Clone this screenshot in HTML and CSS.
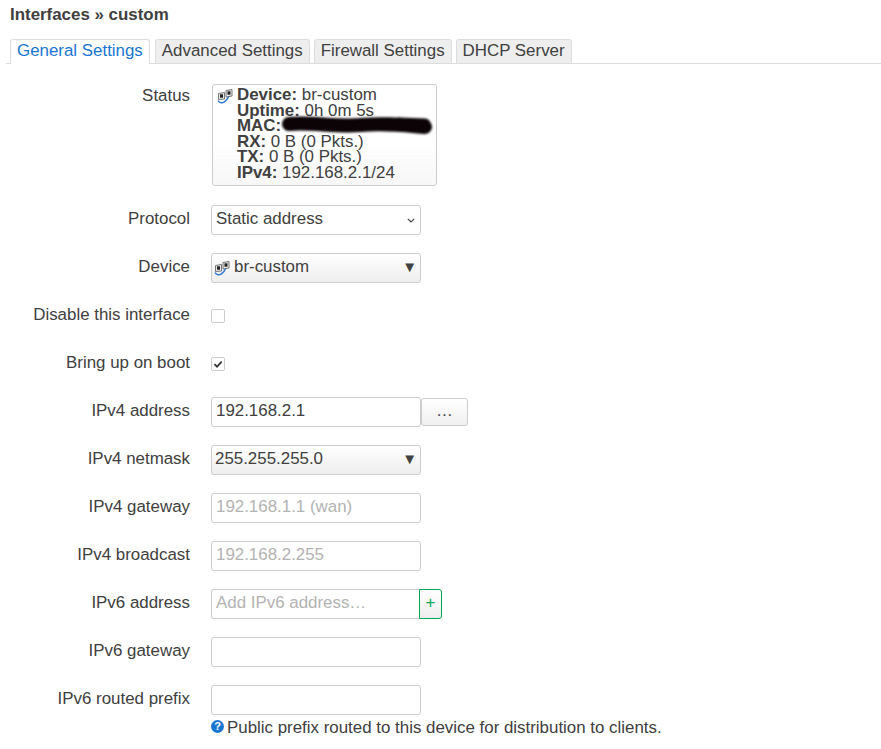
FILE: index.html
```html
<!DOCTYPE html>
<html lang="en">
<head>
<meta charset="utf-8">
<title>Interfaces » custom</title>
<link rel="stylesheet" href="styles.css">
</head>
<body>
<svg class="defs" width="0" height="0" aria-hidden="true">
  <symbol id="bridge" viewBox="0 0 16 16">
    <path d="M1.500 5.500 7.500 4.500v6.500l-6 .5z" fill="#ececec" stroke="#666" stroke-width=".9"/>
    <rect x="3" y="6.300" width="3" height="3.400" fill="#222"/>
    <path d="M9 2.500 15 1.500v6.500l-6 1z" fill="#ececec" stroke="#666" stroke-width=".9"/>
    <rect x="10.500" y="3.300" width="3" height="3.400" fill="#222"/>
    <path d="M1 12.500c1.500 2.800 4.300 2.800 6.500 1.300s3.200-3 4-5" fill="none" stroke="#2f78d0" stroke-width="1.500"/>
  </symbol>
</svg>
<h2 class="title">Interfaces » custom</h2>
<ul class="tabs">
  <li class="tab active">General Settings</li>
  <li class="tab">Advanced Settings</li>
  <li class="tab">Firewall Settings</li>
  <li class="tab">DHCP Server</li>
</ul>
<div class="form">
  <div class="row status-row">
    <label class="label">Status</label>
    <div class="status">
      <svg class="status-icon"><use href="#bridge"/></svg>
      <div class="status-lines">
        <div><b>Device:</b> br-custom</div>
        <div><b>Uptime:</b> 0h 0m 5s</div>
        <div class="mac"><b>MAC:</b>
          <svg class="scribble" viewBox="0 0 155 24"><path d="M8 11C30 9 55 14 80 12s40 0 64 2" fill="none" stroke="#0b0305" stroke-width="14" stroke-linecap="round"/><path d="M118 10l26 1" fill="none" stroke="#0b0305" stroke-width="11" stroke-linecap="round"/></svg>
        </div>
        <div><b>RX:</b> 0 B (0 Pkts.)</div>
        <div><b>TX:</b> 0 B (0 Pkts.)</div>
        <div><b>IPv4:</b> 192.168.2.1/24</div>
      </div>
    </div>
  </div>
  <div class="row">
    <label class="label">Protocol</label>
    <div class="field select plain">Static address
      <svg class="chevron" viewBox="0 0 8 5"><path d="M.8.8 4 4l3.200-3.200" fill="none" stroke="#444" stroke-width="1.200"/></svg>
    </div>
  </div>
  <div class="row">
    <label class="label">Device</label>
    <div class="field select drop"><svg class="dev-icon"><use href="#bridge"/></svg>br-custom<span class="arrow">▼</span></div>
  </div>
  <div class="row">
    <label class="label">Disable this interface</label>
    <span class="check"></span>
  </div>
  <div class="row">
    <label class="label">Bring up on boot</label>
    <span class="check">
      <svg viewBox="0 0 12 12"><path d="M2.500 6.200 5 8.700l4.700-5" fill="none" stroke="#333" stroke-width="1.700"/></svg>
    </span>
  </div>
  <div class="row">
    <label class="label">IPv4 address</label>
    <div class="field">192.168.2.1</div>
    <button class="more">…</button>
  </div>
  <div class="row">
    <label class="label">IPv4 netmask</label>
    <div class="field select drop">255.255.255.0<span class="arrow">▼</span></div>
  </div>
  <div class="row">
    <label class="label">IPv4 gateway</label>
    <div class="field ph">192.168.1.1 (wan)</div>
  </div>
  <div class="row">
    <label class="label">IPv4 broadcast</label>
    <div class="field ph">192.168.2.255</div>
  </div>
  <div class="row">
    <label class="label">IPv6 address</label>
    <div class="field ph grouped">Add IPv6 address…</div>
    <button class="add">+</button>
  </div>
  <div class="row">
    <label class="label">IPv6 gateway</label>
    <div class="field"></div>
  </div>
  <div class="row prefix-row">
    <label class="label">IPv6 routed prefix</label>
    <div class="prefix">
      <div class="field"></div>
      <div class="hint"><span class="help">?</span>Public prefix routed to this device for distribution to clients.</div>
    </div>
  </div>
</div>
</body>
</html>
```
FILE: styles.css
```css
* { box-sizing: border-box; }
html, body { margin: 0; padding: 0; }
body {
  width: 881px;
  height: 749px;
  overflow: hidden;
  background: #fff;
  color: #404040;
  font: 16.900px/20px "Liberation Sans", Arial, sans-serif;
}
.defs { position: absolute; }
.title {
  margin: 0;
  padding: 5px 0 0 10px;
  height: 39px;
  font-size: 16.900px;
  line-height: 20px;
  font-weight: 700;
}
.tabs {
  display: flex;
  gap: 4px;
  list-style: none;
  margin: 0 0 0 6px;
  padding: 0 0 0 4px;
  height: 25px;
  border-bottom: 1px solid #ddd;
}
.tab {
  height: 24px;
  padding: 0 6px;
  line-height: 22px;
  background: #eee;
  border: 1px solid #ddd;
  border-bottom: 0;
  border-radius: 3px 3px 0 0;
  white-space: nowrap;
}
.tab.active {
  height: 25px;
  margin-right: 1px;
  background: #fff;
  color: #1976d2;
}
.form { padding-top: 20px; }
.row {
  display: flex;
  align-items: center;
  height: 30px;
  margin-bottom: 18px;
}
.label {
  flex: 0 0 190px;
  margin-right: 21px;
  padding-bottom: 2px;
  text-align: right;
  white-space: nowrap;
}
.status-row {
  height: 103px;
  align-items: flex-start;
}
.status-row .label { padding: 2px 0 0; }
.status {
  display: flex;
  width: 225px;
  height: 102px;
  margin-left: 1px;
  padding: 2px 4px;
  background: linear-gradient(#fff 55%, #f7f7f7);
  border: 1px solid #ccc;
  border-radius: 3px;
  line-height: 15.500px;
}
.status-icon { flex: none; width: 16px; height: 16px; margin: 1px 4px 0 0; }
.status-lines { white-space: nowrap; }
.mac { position: relative; }
.scribble {
  position: absolute;
  left: 44px;
  top: -5px;
  width: 155px;
  height: 24px;
  filter: blur(.8px);
}
.field {
  width: 210px;
  height: 30px;
  padding: 0 4px;
  line-height: 26px;
  border: 1px solid #ccc;
  border-radius: 3px;
  background: #fff;
  white-space: nowrap;
}
.select { position: relative; display: flex; align-items: center; padding-bottom: 3px; }
.drop {
  background: linear-gradient(#fff, #eee);
  padding-left: 3px;
}
.arrow {
  position: absolute;
  right: 3px;
  top: 0;
  font-size: 15px;
  color: #404040;
}
.chevron { position: absolute; right: 5px; top: 12px; width: 8px; height: 5px; }
.dev-icon { flex: none; width: 16px; height: 16px; margin: 3px 4px 0 -1px; }
.check {
  display: block;
  width: 14px;
  height: 14px;
  background: #fff;
  border: 1px solid #ccc;
  border-radius: 2px;
}
.check svg { display: block; width: 12px; height: 12px; }
.ph { color: #b3b3b3; }
.more {
  width: 47px;
  height: 28px;
  margin-left: 0;
  padding: 0 0 2px;
  font: inherit;
  color: #404040;
  background: linear-gradient(#fff, #f0f0f0);
  border: 1px solid #ccc;
  border-radius: 3px;
}
.grouped { width: 208px; border-radius: 3px 0 0 3px; border-right: 0; }
.add {
  width: 23px;
  height: 30px;
  padding: 0 0 3px;
  font: inherit;
  color: #00a651;
  background: linear-gradient(#fff, #eee);
  border: 1px solid #00a651;
  border-radius: 0 3px 3px 0;
}
.prefix-row { align-items: flex-start; margin-bottom: 0; }
.prefix-row .label { padding: 4px 0 0; }
.prefix { width: 660px; }
.hint { display: flex; align-items: center; height: 20px; margin-top: 3px; white-space: nowrap; }
.help {
  flex: none;
  width: 13px;
  height: 13px;
  margin: -4px 3px 0 0;
  border-radius: 50%;
  background: #1976d2;
  color: #fff;
  font-size: 11px;
  font-weight: 700;
  line-height: 13px;
  text-align: center;
}
```
